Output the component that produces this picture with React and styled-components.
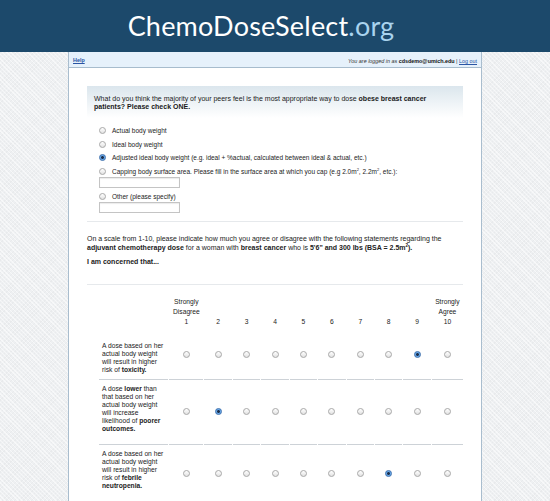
import React from "react";
import styled, { createGlobalStyle } from "styled-components";

const GlobalStyle = createGlobalStyle`
  html, body { margin: 0; padding: 0; }
  body {
    font-family: "Liberation Sans", Arial, Helvetica, sans-serif;
    color: #222;
    background-color: #eef0f2;
    background-image:
      repeating-linear-gradient(45deg, rgba(255,255,255,0.55) 0 1px, transparent 1px 3px),
      repeating-linear-gradient(-45deg, rgba(0,0,0,0.025) 0 1px, transparent 1px 3px);
  }
`;

const Header = styled.header`
  height: 52px;
  background: #1c496b;
  display: flex;
  align-items: center;
  justify-content: center;
  padding-right: 28px;
  box-sizing: border-box;
`;

const Title = styled.h1`
  margin: 0;
  font-family: Lato, "Open Sans", sans-serif;
  font-weight: 400;
  font-size: 27px;
  line-height: 1;
  color: #ffffff;
  letter-spacing: 0.2px;
  padding-bottom: 1px;
`;

const Org = styled.span`
  color: #a9d3ee;
`;

const Panel = styled.main`
  width: 414px;
  margin: 0 auto;
  box-sizing: border-box;
  background: #fff;
  border-left: 1.5px solid #a9bdce;
  border-right: 1.5px solid #a9bdce;
  padding-bottom: 60px;
`;

const TopBar = styled.div`
  height: 16px;
  box-sizing: border-box;
  background: #e6f1fb;
  border-bottom: 1px solid #a7bccd;
  display: flex;
  justify-content: space-between;
  padding: 0 4px;
  font-size: 5.4px;
`;

const HelpLink = styled.a`
  color: #2a55a4;
  text-decoration: underline;
  font-weight: bold;
  margin-top: 5px;
`;

const Login = styled.div`
  align-self: flex-end;
  margin-bottom: 3px;
  font-style: italic;
  color: #333;
  b { font-style: normal; color: #111; }
  a { color: #2a55a4; text-decoration: underline; font-style: normal; }
`;

const Content = styled.div`
  padding: 18px 18px 0;
`;

const QuestionBox = styled.div`
  background: linear-gradient(#dbe6ed, #ffffff 100%);
  padding: 9px 7px 6px;
  font-size: 7px;
  line-height: 8.4px;
  color: #1a1a1a;
`;

const OptionList = styled.div`
  padding: 6px 0 0 12px;
  display: flex;
  flex-direction: column;
`;

const OptionRow = styled.div`
  display: flex;
  align-items: center;
  gap: 6px;
  height: 13.5px;
  font-size: 6.5px;
  color: #222;
  sup { font-size: 4px; line-height: 0; }
`;

const Radio = styled.span`
  flex: none;
  display: inline-block;
  width: 7px;
  height: 7px;
  box-sizing: border-box;
  border-radius: 50%;
  border: 1px solid ${(p) => (p.$checked ? "#3a6fae" : "#a8a8a8")};
  background: ${(p) =>
    p.$checked
      ? "radial-gradient(circle, #1d2f4a 0 1.2px, #5d9fe3 1.6px, #8bc0f2 100%)"
      : "linear-gradient(#ffffff, #e2e2e2)"};
`;

const TextBox = styled.div`
  width: 81px;
  height: 11px;
  box-sizing: border-box;
  border: 1px solid #c4c4c4;
  box-shadow: inset 0 1px 1px rgba(0,0,0,0.08);
  background: #fff;
  margin: -1px 0 ${(p) => p.$mb || "2px"} 0;
`;

const Separator = styled.hr`
  border: none;
  border-top: 1px solid #e6e9ec;
  margin: ${(p) => p.$m || "6px 0 0"};
`;

const Para = styled.p`
  margin: ${(p) => p.$m || "0"};
  font-size: 7px;
  line-height: 9.4px;
  color: #222;
  sup { font-size: 4.5px; line-height: 0; }
`;

const ScaleTable = styled.table`
  margin: 12px 0 0 11px;
  border-collapse: separate;
  border-spacing: 1.2px 0;
  table-layout: fixed;
  width: 366px;
  font-size: 6.7px;
  color: #222;
`;

const HeadCell = styled.th`
  font-weight: normal;
  text-align: center;
  vertical-align: bottom;
  line-height: 9.8px;
  padding: 0 0 4.5px;
`;

const LabelCell = styled.td`
  border-bottom: 1px solid #cdd2d7;
  padding: ${(p) => p.$pad || "5px 2px 11px 3px"};
  line-height: 8px;
  vertical-align: top;
`;

const RadioCell = styled.td`
  border-bottom: 1px solid #cdd2d7;
  text-align: center;
  vertical-align: middle;
  padding: 0;
  line-height: 0;
`;

const cols = [
  { w: 69 },
  { w: 34, label: ["Strongly", "Disagree", "1"] },
  { w: 27.3, label: ["2"] },
  { w: 27.3, label: ["3"] },
  { w: 27.3, label: ["4"] },
  { w: 27.3, label: ["5"] },
  { w: 27.3, label: ["6"] },
  { w: 27.3, label: ["7"] },
  { w: 27.3, label: ["8"] },
  { w: 27.3, label: ["9"] },
  { w: 31, label: ["Strongly", "Agree", "10"] },
];

const rows = [
  {
    text: (
      <>
        A dose based on her actual body weight will result in higher risk of <b>toxicity.</b>
      </>
    ),
    checked: 9,
    pad: "11px 2px 5px 3px",
  },
  {
    text: (
      <>
        A dose <b>lower</b> than that based on her actual body weight will increase likelihood of{" "}
        <b>poorer outcomes.</b>
      </>
    ),
    checked: 2,
  },
  {
    text: (
      <>
        A dose based on her actual body weight will result in higher risk of{" "}
        <b>febrile neutropenia.</b>
      </>
    ),
    checked: 8,
    pad: "5px 2px 13px 3px",
  },
];

export default function App() {
  return (
    <>
      <GlobalStyle />
      <Header>
        <Title>
          ChemoDoseSelect<Org>.org</Org>
        </Title>
      </Header>
      <Panel>
        <TopBar>
          <HelpLink href="#">Help</HelpLink>
          <Login>
            You are logged in as <b>cdsdemo@umich.edu</b> | <a href="#">Log out</a>
          </Login>
        </TopBar>
        <Content>
          <QuestionBox>
            What do you think the majority of your peers feel is the most appropriate way to dose{" "}
            <b>obese breast cancer patients? Please check ONE.</b>
          </QuestionBox>
          <OptionList>
            <OptionRow>
              <Radio />
              Actual body weight
            </OptionRow>
            <OptionRow>
              <Radio />
              Ideal body weight
            </OptionRow>
            <OptionRow>
              <Radio $checked />
              Adjusted ideal body weight (e.g. ideal + %actual, calculated between ideal &amp; actual, etc.)
            </OptionRow>
            <OptionRow>
              <Radio />
              <span>
                Capping body surface area. Please fill in the surface area at which you cap (e.g 2.0m
                <sup>2</sup>, 2.2m<sup>2</sup>, etc.):
              </span>
            </OptionRow>
            <TextBox />
            <OptionRow>
              <Radio />
              Other (please specify)
            </OptionRow>
            <TextBox $mb="0" />
          </OptionList>
          <Separator $m="7.5px 0 0" />
          <Para $m="12px 0 0">
            On a scale from 1-10, please indicate how much you agree or disagree with the following
            statements regarding the <b>adjuvant chemotherapy dose</b> for a woman with{" "}
            <b>breast cancer</b> who is <b>5'6" and 300 lbs (BSA = 2.5m<sup>2</sup>).</b>
          </Para>
          <Para $m="4px 0 0">
            <b>I am concerned that...</b>
          </Para>
          <Separator $m="18px 0 0" />
          <ScaleTable>
            <colgroup>
              {cols.map((c, i) => (
                <col key={i} style={{ width: c.w }} />
              ))}
            </colgroup>
            <thead>
              <tr>
                {cols.map((c, i) => (
                  <HeadCell key={i}>
                    {c.label &&
                      c.label.map((l, j) => (
                        <React.Fragment key={j}>
                          {j > 0 && <br />}
                          {l}
                        </React.Fragment>
                      ))}
                  </HeadCell>
                ))}
              </tr>
            </thead>
            <tbody>
              {rows.map((r, ri) => (
                <tr key={ri}>
                  <LabelCell $pad={r.pad}>{r.text}</LabelCell>
                  {Array.from({ length: 10 }, (_, k) => (
                    <RadioCell key={k}>
                      <Radio $checked={r.checked === k + 1} />
                    </RadioCell>
                  ))}
                </tr>
              ))}
            </tbody>
          </ScaleTable>
        </Content>
      </Panel>
    </>
  );
}
